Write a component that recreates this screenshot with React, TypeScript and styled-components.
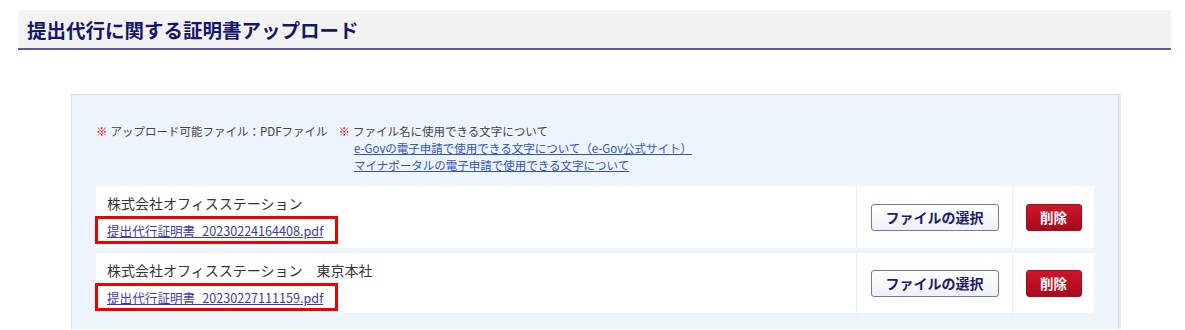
import React from "react";
import styled, { createGlobalStyle } from "styled-components";

const Global = createGlobalStyle`
  html, body { margin: 0; padding: 0; background: #fff; }
  body { font-family: "Noto Sans CJK JP", "Noto Sans", sans-serif; color: #333; }
`;

const Page = styled.div`
  padding: 10px 14px 0 18px;
`;

const Header = styled.div`
  background: #f2f2f2;
  border-bottom: 2px solid #5b5b9e;
  height: 38px;
  display: flex;
  align-items: center;
  padding-left: 9px;
`;

const Title = styled.h1`
  margin: 0;
  font-size: 19.5px;
  font-weight: 700;
  color: #16166a;
  letter-spacing: 0;
`;

const Panel = styled.div`
  margin: 44px 52px 0 53px;
  background: #edf4fc;
  border: 1px solid #dcdcdc;
  border-bottom: none;
  box-shadow: 2px 0 0 #e9e9e9;
  padding: 28px 24px 16px 24px;
`;

const Notes = styled.div`
  display: flex;
  gap: 11px;
  font-size: 11.5px;
  line-height: 17px;
  color: #444;
  margin-bottom: 12px;
`;

const Note = styled.div`
  display: flex;
`;

const Mark = styled.span`
  color: #e60012;
  margin-right: 3px;
`;

const NoteBody = styled.div`
  display: flex;
  flex-direction: column;
`;

const NoteLink = styled.a`
  color: #3355bb;
  text-decoration: underline;
  margin-left: 1px;
`;

const Rows = styled.div`
  display: flex;
  flex-direction: column;
  gap: 5px;
`;

const Row = styled.div<{ $h: number }>`
  display: grid;
  grid-template-columns: 1fr 156px 82px;
  background: #fff;
  height: ${(p) => p.$h}px;
`;

const MainCell = styled.div`
  padding: 6px 11px 0;
  display: flex;
  flex-direction: column;
  align-items: flex-start;
`;

const Company = styled.div`
  font-size: 14px;
  line-height: 22px;
  color: #333;
`;

const Highlight = styled.span`
  border: 3px solid #f00000;
  margin-left: -12px;
  padding: 0 12px 0 9px;
  height: 22px;
  display: flex;
  align-items: center;
  margin-top: 2px;
`;

const FileLink = styled.a`
  font-size: 12.6px;
  color: #3b3ba8;
  text-decoration: underline;
`;

const BtnCell = styled.div`
  border-left: 1px solid #e3effa;
  display: flex;
  align-items: center;
  justify-content: center;
`;

const SelectButton = styled.button`
  width: 128px;
  height: 27px;
  border: 1px solid #6b76c6;
  border-radius: 3px;
  background: linear-gradient(#ffffff, #eef0f4);
  color: #1c1c6a;
  font-family: "Noto Sans CJK JP", sans-serif;
  font-weight: 700;
  font-size: 14px;
  padding: 0;
`;

const DeleteButton = styled.button`
  width: 56px;
  height: 27px;
  border: 1px solid #a50d1d;
  border-radius: 3px;
  background: linear-gradient(#d0142a, #a50c1c);
  color: #fff;
  font-family: "Noto Sans CJK JP", sans-serif;
  font-weight: 700;
  font-size: 13.5px;
  padding: 0;
`;

const rows = [
  { name: "株式会社オフィスステーション", file: "提出代行証明書_20230224164408.pdf", h: 62 },
  { name: "株式会社オフィスステーション　東京本社", file: "提出代行証明書_20230227111159.pdf", h: 60 },
];

export default function App() {
  return (
    <>
      <Global />
      <Page>
        <Header>
          <Title>提出代行に関する証明書アップロード</Title>
        </Header>
        <Panel>
          <Notes>
            <Note>
              <Mark>※</Mark>
              <span>アップロード可能ファイル：PDFファイル</span>
            </Note>
            <Note>
              <Mark>※</Mark>
              <NoteBody>
                <span>ファイル名に使用できる文字について</span>
                <NoteLink href="#">e-Govの電子申請で使用できる文字について（e-Gov公式サイト）</NoteLink>
                <NoteLink href="#">マイナポータルの電子申請で使用できる文字について</NoteLink>
              </NoteBody>
            </Note>
          </Notes>
          <Rows>
            {rows.map((r) => (
              <Row key={r.file} $h={r.h}>
                <MainCell>
                  <Company>{r.name}</Company>
                  <Highlight>
                    <FileLink href="#">{r.file}</FileLink>
                  </Highlight>
                </MainCell>
                <BtnCell>
                  <SelectButton>ファイルの選択</SelectButton>
                </BtnCell>
                <BtnCell>
                  <DeleteButton>削除</DeleteButton>
                </BtnCell>
              </Row>
            ))}
          </Rows>
        </Panel>
      </Page>
    </>
  );
}
